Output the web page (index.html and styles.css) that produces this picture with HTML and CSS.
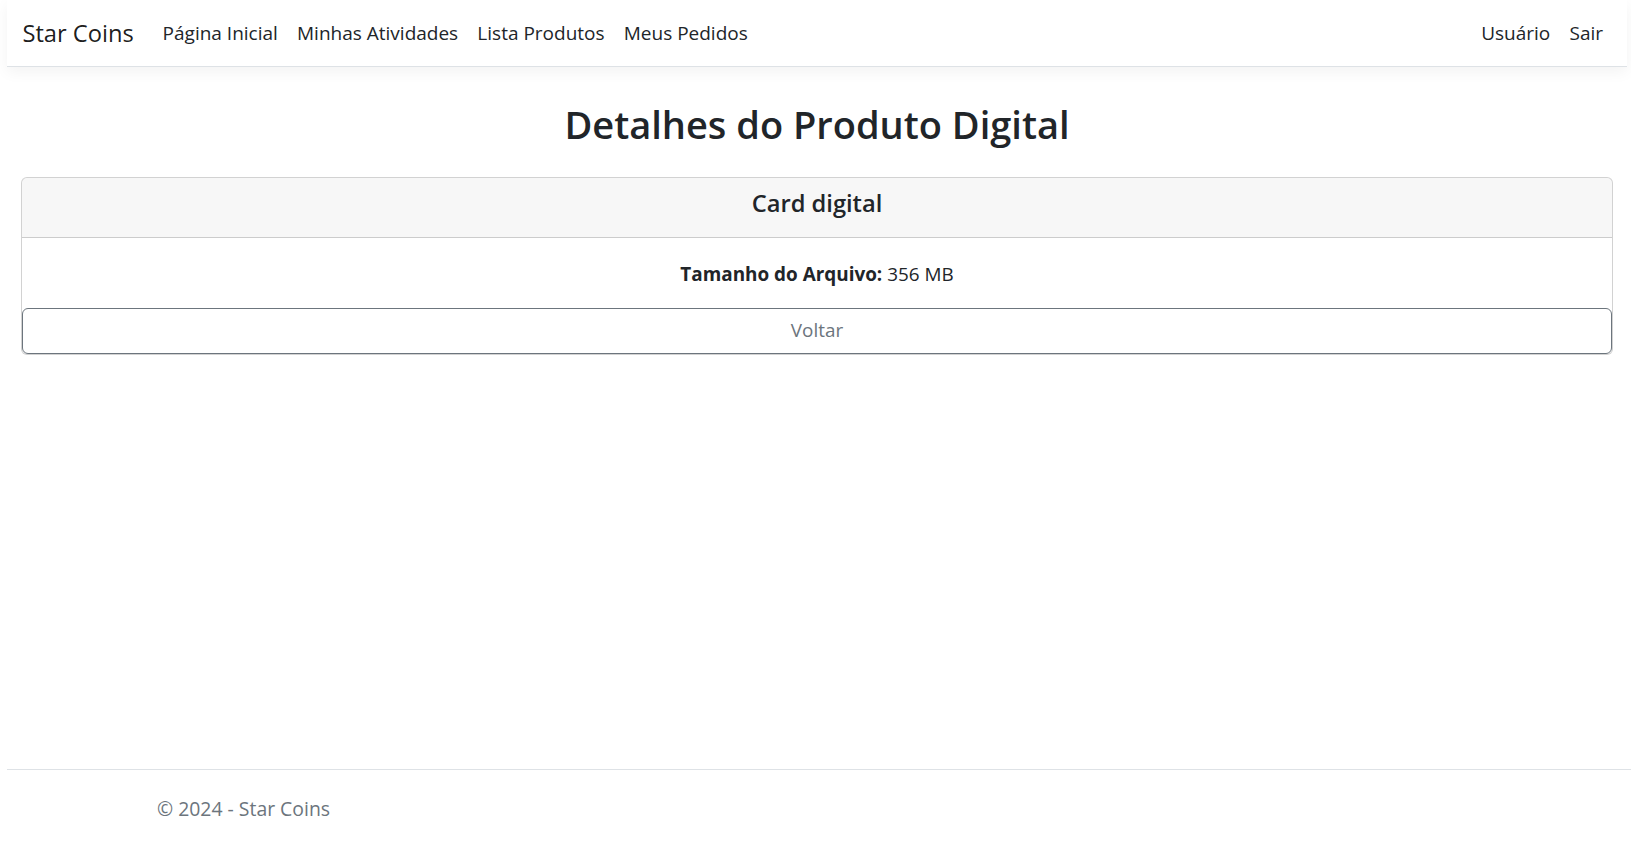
FILE: index.html
```html
<!DOCTYPE html>
<html lang="pt-BR">
<head>
<meta charset="utf-8">
<title>Detalhes do Produto Digital - Star Coins</title>
<link rel="stylesheet" href="styles.css">
</head>
<body>
<div class="page">
  <header class="navbar">
    <div class="nav-left">
      <a class="brand" href="#">Star Coins</a>
      <ul class="nav-links">
        <li><a class="nav-link" href="#">Página Inicial</a></li>
        <li><a class="nav-link" href="#">Minhas Atividades</a></li>
        <li><a class="nav-link" href="#">Lista Produtos</a></li>
        <li><a class="nav-link" href="#">Meus Pedidos</a></li>
      </ul>
    </div>
    <ul class="nav-links">
      <li><a class="nav-link" href="#">Usuário</a></li>
      <li><a class="nav-link" href="#">Sair</a></li>
    </ul>
  </header>

  <main class="content">
    <h1 class="title">Detalhes do Produto Digital</h1>
    <div class="card">
      <div class="card-header">
        <h5 class="card-title">Card digital</h5>
      </div>
      <div class="card-body">
        <p class="card-text"><strong>Tamanho do Arquivo:</strong> 356 MB</p>
      </div>
      <a class="btn-back" href="#">Voltar</a>
    </div>
  </main>

  <footer class="footer">
    <div class="footer-inner">© 2024 - Star Coins</div>
  </footer>
</div>
</body>
</html>
```

FILE: styles.css
```css
* {
  box-sizing: border-box;
}

html, body {
  margin: 0;
  padding: 0;
  background: #ffffff;
}

body {
  font-family: "Open Sans", "Noto Sans", "DejaVu Sans", sans-serif;
  font-size: 18.9px;
  line-height: 28.8px;
  color: #212529;
  overflow: hidden;
}

.page {
  min-height: 100vh;
  display: flex;
  flex-direction: column;
  margin: 0 4px 0 7px;
}

a {
  text-decoration: none;
}

/* Navbar */
.navbar {
  display: flex;
  justify-content: space-between;
  align-items: center;
  padding: 9px 14.4px;
  background: #ffffff;
  border-bottom: 1px solid #dee2e6;
  box-shadow: 0 5px 14px rgba(0, 0, 0, 0.05);
  position: relative;
  z-index: 1;
}

.nav-left {
  display: flex;
  align-items: center;
}

.brand {
  font-size: 23.7px;
  line-height: 36px;
  padding: 6px 0;
  margin-left: 1px;
  margin-right: 19.2px;
  color: rgba(0, 0, 0, 0.9);
}

.nav-links {
  display: flex;
  list-style: none;
  margin: 0;
  padding: 0;
}

.nav-link {
  display: block;
  padding: 9.6px;
  font-size: 19px;
  line-height: 28.8px;
  color: #212529;
}

/* Content */
.content {
  padding: 0 14.4px;
  margin-top: 19.2px;
}

.title {
  font-size: 38px;
  font-weight: 600;
  line-height: 46.8px;
  text-align: center;
  margin: 15px 0 29px;
  color: #212529;
}

.card {
  border: 1px solid rgba(0, 0, 0, 0.175);
  border-radius: 6px;
  background: #ffffff;
}

.card-header {
  padding: 11px 19.2px 9.6px;
  background: rgba(0, 0, 0, 0.03);
  border-bottom: 1px solid rgba(0, 0, 0, 0.175);
  border-radius: 5px 5px 0 0;
  text-align: center;
}

.card-title {
  margin: 0 0 9.6px;
  font-size: 23.7px;
  font-weight: 600;
  line-height: 28.8px;
}

.card-body {
  padding: 22px 19.2px 19px;
  text-align: center;
}

.card-text {
  margin: 0;
}

.card-text strong {
  font-weight: 700;
}

.btn-back {
  display: block;
  width: 100%;
  padding: 7.6px 14.4px;
  border: 1px solid #6c757d;
  border-radius: 6px;
  color: #6c757d;
  text-align: center;
  font-size: 18.9px;
  line-height: 28.8px;
}

/* Footer */
.footer {
  margin-top: auto;
  margin-right: -4px;
  border-top: 1px solid #dee2e6;
  padding-top: 4px;
  line-height: 70px;
  font-size: 19.4px;
  color: #6c757d;
  white-space: nowrap;
}

.footer-inner {
  padding-left: 150px;
}
```
